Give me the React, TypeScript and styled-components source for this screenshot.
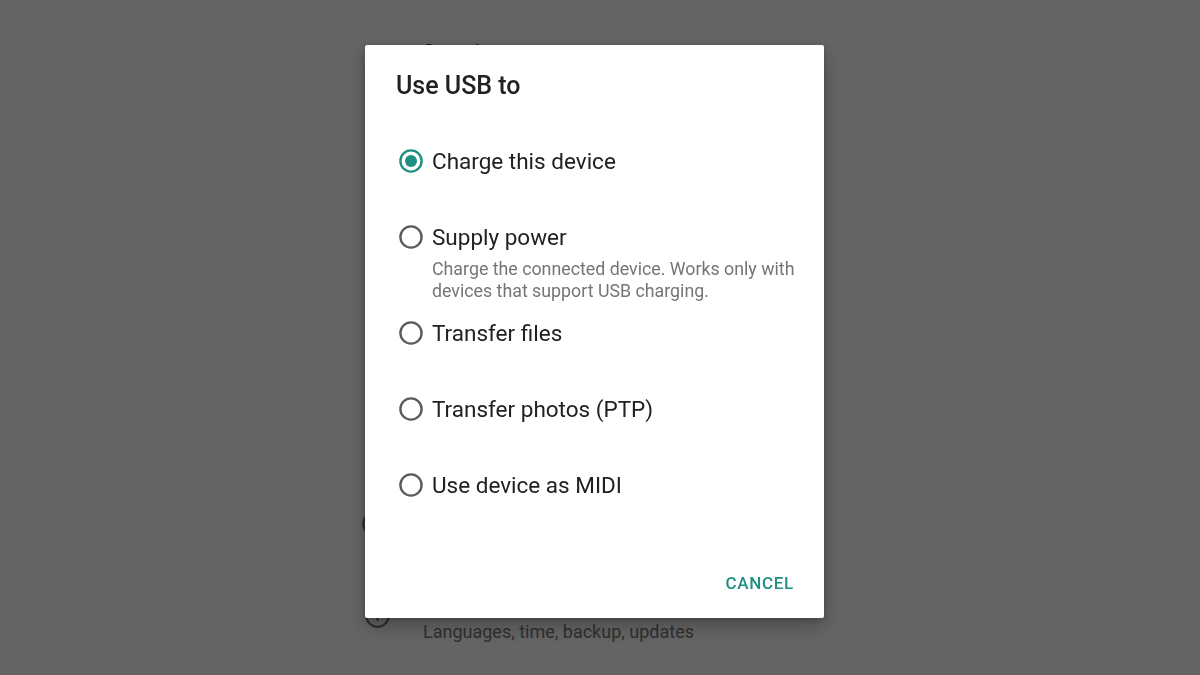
import React, { useState } from 'react';
import styled, { createGlobalStyle } from 'styled-components';
import { Volume2, HardDrive, Lock, Users, Accessibility, Info } from 'lucide-react';

const GlobalStyle = createGlobalStyle`
  html, body {
    margin: 0;
    padding: 0;
    background: #fafafa;
    font-family: Roboto, "Noto Sans", "Liberation Sans", sans-serif;
    overflow: hidden;
  }
`;

const GoogleG: React.FC = () => (
  <svg width="30" height="30" viewBox="0 0 30 30" fill="none" stroke="currentColor" strokeWidth="2.4" strokeLinecap="round">
    <path d="M23.5 7.5A12.5 12.5 0 1 0 26.5 16H15" />
  </svg>
);

// rows hidden behind the dialog only keep their icons
type Setting = { title?: string; subtitle?: string; icon: React.ReactNode };

const settings: Setting[] = [
  { title: 'Sound', icon: <Volume2 size={26} strokeWidth={2} /> },
  { icon: <HardDrive size={26} strokeWidth={2} /> },
  { icon: <Lock size={26} strokeWidth={2} /> },
  { icon: <Users size={26} strokeWidth={2} /> },
  { icon: <Accessibility size={26} strokeWidth={2} /> },
  { icon: <GoogleG /> },
  { title: 'System', subtitle: 'Languages, time, backup, updates', icon: <Info size={27} strokeWidth={2} /> },
];

const options = [
  { id: 'charge', label: 'Charge this device' },
  {
    id: 'supply',
    label: 'Supply power',
    description: 'Charge the connected device. Works only with devices that support USB charging.',
  },
  { id: 'files', label: 'Transfer files' },
  { id: 'photos', label: 'Transfer photos (PTP)' },
  { id: 'midi', label: 'Use device as MIDI' },
];

const RadioIcon: React.FC<{ checked: boolean }> = ({ checked }) => (
  <RadioBox width="24" height="24" viewBox="0 0 24 24">
    <circle cx="12" cy="12" r="10.6" fill="none" stroke={checked ? '#1f8f82' : '#5c5c5c'} strokeWidth="2.4" />
    {checked && <circle cx="12" cy="12" r="6" fill="#1f8f82" />}
  </RadioBox>
);

const App: React.FC = () => {
  const [selected, setSelected] = useState<string>('charge');

  return (
    <>
      <GlobalStyle />
      <SettingsList>
        {settings.map((s, i) => (
          <SettingRow key={i}>
            <SettingIcon>{s.icon}</SettingIcon>
            {s.title && (
              <SettingText>
                <SettingTitle>{s.title}</SettingTitle>
                {s.subtitle && <SettingSubtitle>{s.subtitle}</SettingSubtitle>}
              </SettingText>
            )}
          </SettingRow>
        ))}
      </SettingsList>
      <Scrim>
        <Dialog role="dialog">
          <DialogTitle>Use USB to</DialogTitle>
          <OptionList>
            {options.map(o => (
              <Option key={o.id} $hasDesc={!!o.description} onClick={() => setSelected(o.id)}>
                <OptionMain>
                  <RadioIcon checked={selected === o.id} />
                  <OptionLabel>{o.label}</OptionLabel>
                </OptionMain>
                {o.description && <Description>{o.description}</Description>}
              </Option>
            ))}
          </OptionList>
          <Footer>
            <TextButton type="button">CANCEL</TextButton>
          </Footer>
        </Dialog>
      </Scrim>
    </>
  );
};

export default App;

const SettingsList = styled.div`
  display: flex;
  flex-direction: column;
  margin: 17px 0 0 362px;
  width: 520px;
`;

const SettingRow = styled.div`
  display: flex;
  align-items: center;
  height: 92px;
  gap: 31px;
`;

const SettingIcon = styled.div`
  width: 30px;
  display: flex;
  justify-content: center;
  color: #757575;
`;

const SettingText = styled.div`
  display: flex;
  flex-direction: column;
  gap: 4px;
  height: 52px;
  padding-top: 4px;
`;

const SettingTitle = styled.div`
  font-size: 20px;
  line-height: 26px;
  color: #212121;
`;

const SettingSubtitle = styled.div`
  font-size: 18px;
  line-height: 22px;
  color: #757575;
`;

const Scrim = styled.div`
  position: fixed;
  inset: 0;
  background: rgba(0, 0, 0, 0.6);
`;

const Dialog = styled.div`
  position: absolute;
  left: 365px;
  top: 45px;
  width: 459px;
  height: 573px;
  box-sizing: border-box;
  display: flex;
  flex-direction: column;
  padding: 27px 22px 17px 31px;
  background: #fff;
  border-radius: 2px;
  box-shadow: 0 8px 20px rgba(0, 0, 0, 0.25), 0 2px 6px rgba(0, 0, 0, 0.2);
`;

const DialogTitle = styled.h2`
  margin: 0;
  font-size: 25px;
  line-height: 28px;
  font-weight: 500;
  color: #212121;
`;

const OptionList = styled.div`
  display: flex;
  flex-direction: column;
  margin-top: 23px;
`;

const Option = styled.div<{ $hasDesc: boolean }>`
  display: flex;
  flex-direction: column;
  padding: 23px 0 ${p => (p.$hasDesc ? '0' : '23px')} 3px;
  cursor: pointer;
`;

const OptionMain = styled.div`
  display: flex;
  align-items: center;
  gap: 9px;
  height: 30px;
`;

const RadioBox = styled.svg`
  flex: none;
`;

const OptionLabel = styled.span`
  font-size: 22.5px;
  line-height: 30px;
  color: #212121;
`;

const Description = styled.div`
  margin: 6px 0 -7px 33px;
  font-size: 17.8px;
  line-height: 22px;
  color: #757575;
  max-width: 378px;
`;

const Footer = styled.div`
  margin-top: auto;
  display: flex;
  justify-content: flex-end;
`;

const TextButton = styled.button`
  border: none;
  background: none;
  padding: 0 8px;
  height: 36px;
  font-family: Roboto, "Liberation Sans", sans-serif;
  font-size: 17px;
  font-weight: 500;
  letter-spacing: 0.7px;
  color: #1f8f82;
  cursor: pointer;
`;
